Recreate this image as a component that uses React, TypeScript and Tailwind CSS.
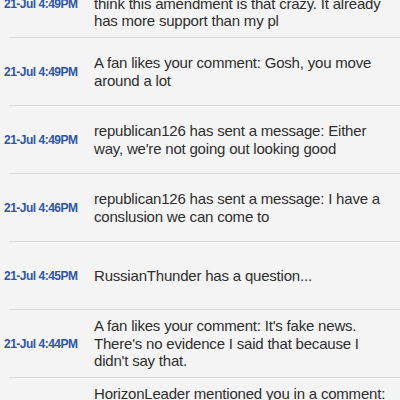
const rows = [
    { time: '21-Jul 4:49PM', text: "HorizonLeader has sent a message: I don't think this amendment is that crazy. It already has more support than my pl" },
    { time: '21-Jul 4:49PM', text: 'A fan likes your comment: Gosh, you move around a lot' },
    { time: '21-Jul 4:49PM', text: "republican126 has sent a message: Either way, we're not going out looking good" },
    { time: '21-Jul 4:46PM', text: 'republican126 has sent a message: I have a conslusion we can come to' },
    { time: '21-Jul 4:45PM', text: 'RussianThunder has a question...' },
    { time: '21-Jul 4:44PM', text: "A fan likes your comment: It's fake news. There's no evidence I said that because I didn't say that." },
    { time: '21-Jul 4:43PM', text: 'HorizonLeader mentioned you in a comment: Have you even read the bill that we are voting on tomorrow?' },
]

const App = () => {
    return (
        <div className="w-[400px] h-[400px] overflow-hidden bg-[#f4f4f4]" style={{ fontFamily: '"Liberation Sans", Arial, sans-serif' }}>
            <div className="-mt-[30px]">
                {rows.map((row, i) => (
                    <div key={i} className="pl-[9px]">
                        <div className="flex items-center min-h-[67px] -ml-[9px] py-[7px]">
                            <div className="w-[94px] shrink-0 pl-[4px] text-[12px] font-bold tracking-[-0.5px] text-[#2f56a6]">{row.time}</div>
                            <div className="flex-1 pr-[10px] text-[15px] leading-[17.5px] tracking-[-0.2px] text-[#2e2e2e]">{row.text}</div>
                        </div>
                        <div className="h-px bg-[#d8d8d8]" />
                    </div>
                ))}
            </div>
        </div>
    )
}

export default App
